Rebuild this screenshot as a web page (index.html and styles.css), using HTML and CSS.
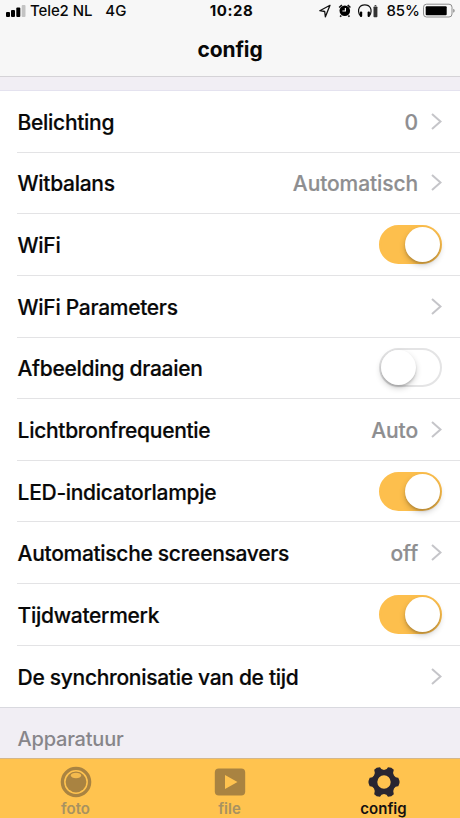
FILE: index.html
```html
<!DOCTYPE html>
<html lang="nl">
<head>
<meta charset="utf-8">
<title>config</title>
<link rel="stylesheet" href="styles.css">
</head>
<body>
<div class="screen">
  <header class="top">
    <div class="status">
      <div class="status-left">
        <svg class="signal" width="20" height="12" viewBox="0 0 20 12"><rect x="0" y="7" width="4" height="5" rx="1"/><rect x="5" y="5" width="4" height="7" rx="1"/><rect x="10.300" y="2.500" width="4" height="9.500" rx="1"/><rect x="15.700" y="0" width="3.800" height="12" rx="1" fill="#c3c3c3"/></svg>
        <span class="carrier">Tele2 NL</span><span class="network">4G</span>
      </div>
      <span class="clock">10:28</span>
      <div class="status-right">
        <svg width="62" height="16" viewBox="0 0 62 16">
          <path d="M13 2.300 2.800 7.700l4.900.8.700 5.300z" fill="none" stroke="#111" stroke-width="1.300" stroke-linejoin="round"/>
          <circle cx="27.800" cy="7.800" r="5.300"/><path d="m22.200 4.500 2.700-2.500M33.400 4.500 30.700 2M24.200 12.500l-1 1.200M31.400 12.500l1 1.200" stroke="#111" stroke-width="1.700"/><path d="M28.400 5v3h-3" stroke="#f7f7f7" stroke-width="1.200" fill="none"/>
          <path d="M43 12.500C39.700 6.500 42.500 1.900 47.800 1.900S55.900 6.500 52.700 12.500" fill="none" stroke="#111" stroke-width="1.200"/><rect x="42.900" y="8.500" width="2.300" height="5.500" rx="1"/><rect x="50.600" y="8.500" width="2.300" height="5.500" rx="1"/>
          <rect x="56.500" y="3.500" width="3.900" height="10.700" rx=".8" fill="#333"/><path d="M57.600 2.600h1.700" stroke="#333"/>
        </svg>
        <span class="percent">85%</span>
        <svg class="battery" width="34" height="16" viewBox="0 0 34 16"><rect x=".5" y="1.200" width="28.500" height="12.800" rx="3" fill="none" stroke="#8d8d8d"/><rect x="2.700" y="3.200" width="21" height="9" rx="1"/><path d="M30.200 5.700v4q1.500-.5 1.500-2t-1.500-2" fill="#8d8d8d"/></svg>
      </div>
    </div>
    <h1 class="title">config</h1>
  </header>
  <main class="content">
    <ul class="list">
      <li class="row"><span class="label">Belichting</span><span class="value">0</span><svg class="chevron" viewBox="0 0 11 17"><path d="m1 1 8.500 7.500L1 16"/></svg></li>
      <li class="row"><span class="label">Witbalans</span><span class="value">Automatisch</span><svg class="chevron" viewBox="0 0 11 17"><path d="m1 1 8.500 7.500L1 16"/></svg></li>
      <li class="row"><span class="label">WiFi</span><span class="switch on"><i class="knob"></i></span></li>
      <li class="row"><span class="label">WiFi Parameters</span><svg class="chevron" viewBox="0 0 11 17"><path d="m1 1 8.500 7.500L1 16"/></svg></li>
      <li class="row"><span class="label">Afbeelding draaien</span><span class="switch"><i class="knob"></i></span></li>
      <li class="row"><span class="label">Lichtbronfrequentie</span><span class="value">Auto</span><svg class="chevron" viewBox="0 0 11 17"><path d="m1 1 8.500 7.500L1 16"/></svg></li>
      <li class="row"><span class="label">LED-indicatorlampje</span><span class="switch on"><i class="knob"></i></span></li>
      <li class="row"><span class="label">Automatische screensavers</span><span class="value">off</span><svg class="chevron" viewBox="0 0 11 17"><path d="m1 1 8.500 7.500L1 16"/></svg></li>
      <li class="row"><span class="label">Tijdwatermerk</span><span class="switch on"><i class="knob"></i></span></li>
      <li class="row"><span class="label">De synchronisatie van de tijd</span><svg class="chevron" viewBox="0 0 11 17"><path d="m1 1 8.500 7.500L1 16"/></svg></li>
    </ul>
    <h2 class="section">Apparatuur</h2>
  </main>
  <nav class="tabs">
    <a class="tab"><svg width="32" height="32" viewBox="0 0 32 32"><circle cx="16" cy="16" r="13.600" fill="none" stroke="#a98341" stroke-width="3.400"/><circle cx="16" cy="16" r="10.400" fill="#a98341"/><ellipse cx="16" cy="9.500" rx="5.200" ry="2.700" fill="#f3ba4e"/></svg><span>foto</span></a>
    <a class="tab"><svg width="32" height="32" viewBox="0 0 32 32"><rect x=".8" y="2.500" width="30.400" height="27" rx="4" fill="#a98341"/><path d="M11 9v14l12.500-7z" fill="#ffc34f"/></svg><span>file</span></a>
    <a class="tab active"><svg width="32" height="32" viewBox="0 0 32 32"><path fill="#292631" fill-rule="evenodd" d="M8.700 1.800 12 1.300Q13 4 16 4t4-2.700l3.300.5 2.500 2Q24.300 7 26 9.500t4.300 2.300L31.500 15v2l-1.200 3.200Q27.500 20 26 22.500t-.2 5.700l-2.500 2-3.300.5Q19 28 16 28t-4 2.700l-3.300-.5-2.500-2Q7.500 25 6 22.500t-4.300-2.300L.5 17v-2l1.200-3.200Q4.500 12 6 9.500t.2-5.700zM16 9.300a6.700 6.700 0 1 0 0 13.400 6.700 6.700 0 0 0 0-13.400"/></svg><span>config</span></a>
  </nav>
</div>
</body>
</html>
```
FILE: styles.css
```css
* { box-sizing: border-box; }
body { margin: 0; font-family: Inter, "Liberation Sans", sans-serif; color: #080808; }
.screen { width: 460px; height: 818px; display: flex; flex-direction: column; overflow: hidden; background: #f1eef4; }
.top { height: 77px; flex: none; background: #f7f7f7; border-bottom: 1px solid #d5d3d7; }
.status { height: 21px; display: grid; grid-template-columns: 1fr auto 1fr; align-items: center; padding: 0 4px 0 6px; font-size: 15px; font-weight: 500; line-height: 21px; }
.status-left, .status-right { display: flex; align-items: center; }
.status-right { justify-content: flex-end; margin-right: -1px; }
.carrier { margin-left: 4px; letter-spacing: -.1px; }
.network { margin-left: 13px; }
.clock { padding-left: 1px; font-weight: 700; letter-spacing: .5px; }
.percent { margin: 0 3px 0 7px; }
.title { margin: 15px 0 0; text-align: center; font-size: 21px; line-height: 28px; font-weight: 700; letter-spacing: -.1px; }
.content { flex: 1; padding-top: 14px; }
.list { list-style: none; margin: 0; padding: 0 0 0 17px; background: #fff; box-shadow: 0 -1px #e4e2ef, 0 1px #d9d9df; }
.row { height: 61.650px; display: flex; align-items: center; padding: 0 18px 0 0; border-bottom: 1px solid #e3e3e5; font-size: 21px; font-weight: 550; white-space: nowrap; -webkit-text-stroke: .2px; }
.row:last-child { border-bottom: 0; }
.label { margin-right: auto; padding: 2px 0 0 .6px; letter-spacing: -.3px; }
.value { color: #8e8e90; margin-right: 13px; padding-top: 2px; letter-spacing: -.1px; }
.chevron { width: 11px; height: 17px; flex: none; fill: none; stroke: #c5c5c9; stroke-width: 2; }
.switch { width: 63px; height: 39px; flex: none; padding: 2px; border-radius: 20px; border: 2px solid #e4e4e5; display: flex; align-items: center; }
.switch .knob { width: 35px; height: 35px; flex: none; margin-left: -2px; border-radius: 50%; background: #fff; box-shadow: 0 3px 6px #0003, 0 2px 2px #0002; }
.switch.on { background: #fdbf4d; border-color: #fdbf4d; justify-content: flex-end; }
.switch.on .knob { margin: 0 -2px 0 0; }
.section { margin: 18px 0 0 17.500px; font-size: 20px; line-height: 28px; font-weight: 500; letter-spacing: -.2px; color: #87858a; }
.tabs { height: 60px; flex: none; display: grid; grid-template-columns: repeat(3, 154px); margin-left: -1px; justify-content: center; background: #ffc34f; border-top: 1px solid #d4b78a; }
.tab { display: flex; flex-direction: column; align-items: center; padding-top: 7px; color: #a89261; font-size: 15px; line-height: 22px; font-weight: 600; }
.tab.active { color: #151111; }
```
